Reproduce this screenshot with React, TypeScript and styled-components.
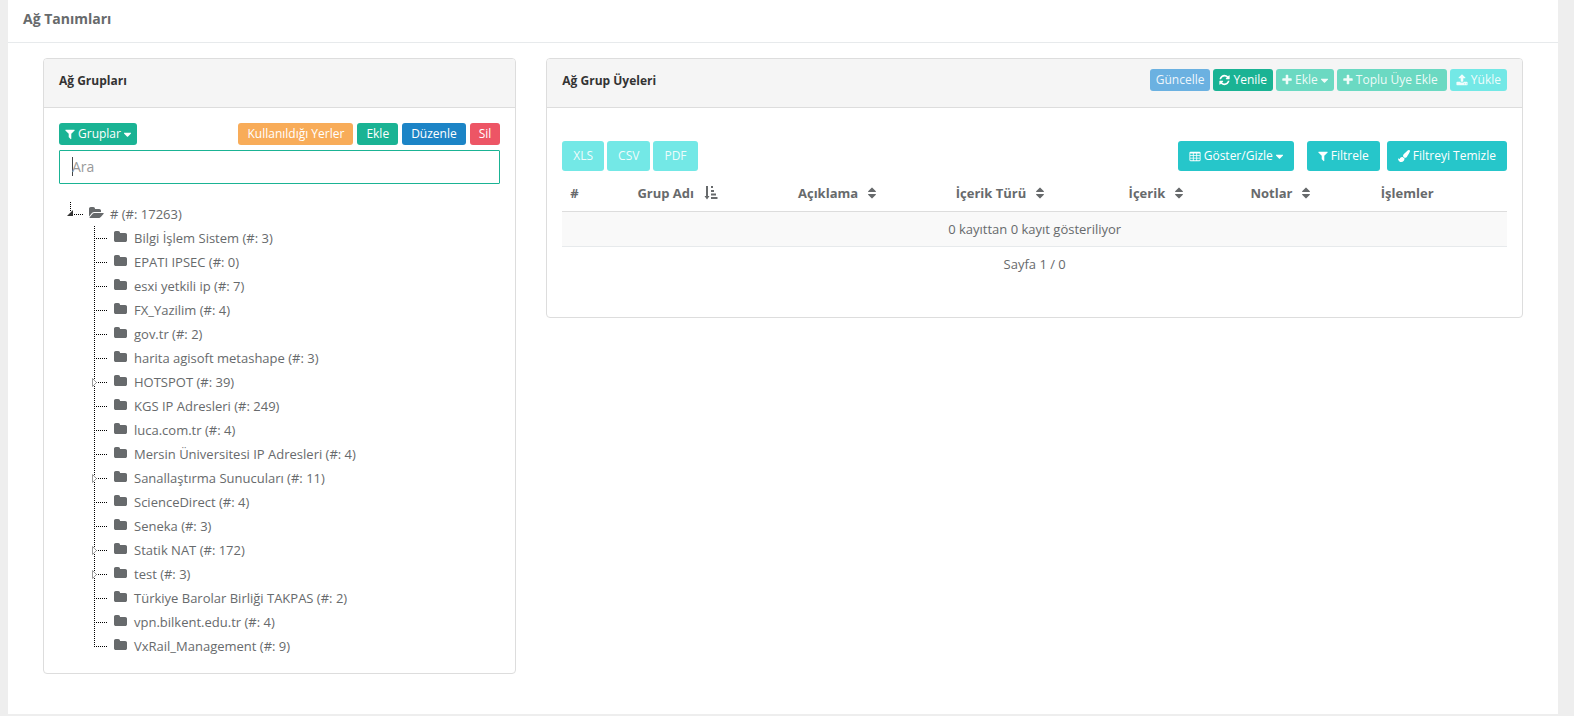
import React from "react";
import styled, { createGlobalStyle } from "styled-components";

const GlobalStyle = createGlobalStyle`
  *, *::before, *::after { box-sizing: border-box; }
  body {
    margin: 0;
    background: #eeeeee;
    color: #676a6c;
    font-family: "Open Sans", "Liberation Sans", sans-serif;
    font-size: 13px;
    line-height: 20px;
  }
  button, input { font-family: inherit; }
`;

const Page = styled.main`
  margin: 0 16px 0 8px;
  background: #ffffff;
  padding-bottom: 40px;
`;

const PageHeader = styled.header`
  padding: 9px 15px 13px;
  border-bottom: 1px solid #e7eaec;
`;

const PageTitle = styled.h1`
  margin: 0;
  font-size: 14px;
  line-height: 20px;
  font-weight: 700;
`;

const Columns = styled.div`
  display: grid;
  grid-template-columns: minmax(0, 1fr) minmax(0, 2fr);
  align-items: start;
  padding: 15px 20px 0;
`;

const Column = styled.div`
  padding: 0 15px;
`;

const Panel = styled.section`
  border: 1px solid #dddddd;
  border-radius: 4px;
  background: #ffffff;
  overflow: hidden;
`;

const PanelHeader = styled.header`
  display: flex;
  justify-content: space-between;
  align-items: flex-start;
  height: 49px;
  padding: 10px 15px;
  background: #f5f5f5;
  border-bottom: 1px solid #dddddd;
`;

const PanelTitle = styled.h2`
  margin: 0;
  color: #333333;
  font-size: 12px;
  line-height: 24px;
  font-weight: 700;
`;

const PanelBody = styled.div<{ $top?: number; $bottom?: number }>`
  padding: ${({ $top = 15 }) => $top}px 15px ${({ $bottom = 15 }) => $bottom}px;
`;

const Toolbar = styled.div`
  display: flex;
  justify-content: space-between;
`;

const ButtonGroup = styled.div<{ $gap?: number }>`
  display: flex;
  gap: ${({ $gap = 3 }) => $gap}px;
`;

const tones = {
  primary: { base: "#1ab394", muted: "#6bd9c2" },
  success: { base: "#1c84c6", muted: "#6bb1e1" },
  info: { base: "#26c6ca", muted: "#73e8e6" },
  warning: { base: "#f8ac59", muted: "#fbcd9b" },
  danger: { base: "#ed5565", muted: "#f499a3" },
};

const Button = styled.button<{
  $tone: keyof typeof tones;
  $size?: "small" | "medium";
  $wide?: boolean;
  $trailing?: boolean;
}>`
  display: inline-flex;
  align-items: center;
  gap: 3px;
  height: ${({ $size }) => ($size === "medium" ? 30 : 22)}px;
  padding: 0 ${({ $size, $wide }) => ($size === "medium" ? 11 : $wide ? 9 : 6)}px;
  ${({ $trailing }) => $trailing && "padding-right: 9px;"}
  border: 0;
  border-radius: 3px;
  background: ${({ $tone }) => tones[$tone].base};
  color: #ffffff;
  font-size: 12px;
  line-height: 18px;
  white-space: nowrap;
  cursor: pointer;

  &:disabled {
    background: ${({ $tone }) => tones[$tone].muted};
    color: rgba(255, 255, 255, 0.9);
    cursor: not-allowed;
  }
`;

const SearchInput = styled.input`
  display: block;
  width: 100%;
  height: 34px;
  margin-top: 5px;
  padding: 6px 12px 8px;
  border: 1px solid #1ab394;
  border-radius: 1px;
  background: #ffffff;
  color: #676a6c;
  font-size: 14px;
  outline: none;

  &::placeholder { color: #999999; opacity: 1; }

  /* steady caret while the field is empty */
  &:placeholder-shown {
    caret-color: transparent;
    background: #ffffff linear-gradient(#444648, #444648) 12px 6px / 1px 19px no-repeat;
  }
`;

const Tree = styled.ul`
  list-style: none;
  margin: 0;
  padding: 0;
`;

const RootTree = styled(Tree)`
  margin-top: 18px;
`;

const Branch = styled(Tree)`
  padding-left: 24px;
`;

const NodeRow = styled.div`
  display: flex;
  align-items: center;
  height: 24px;
`;

const Joint = styled.svg`
  flex: none;
  width: 24px;
  height: 24px;
`;

const NodeLink = styled.a`
  display: flex;
  align-items: center;
  gap: 3px;
  color: inherit;
  text-decoration: none;
  white-space: nowrap;
`;

const NodeIcon = styled.span`
  display: flex;
  justify-content: center;
  width: 24px;
  padding: 0 0 2px 2px;
`;

const Table = styled.table`
  width: 100%;
  margin-top: 5px;
  border-collapse: collapse;
  table-layout: fixed;
`;

const HeadCell = styled.th<{ $width: string }>`
  width: ${({ $width }) => $width};
  height: 35px;
  padding: 0 8px 1px;
  border-bottom: 1px solid #dddddd;
  text-align: left;
  font-weight: 700;
`;

const HeadLabel = styled.span`
  display: flex;
  align-items: center;
  gap: 10px;
  white-space: nowrap;
`;

const Cell = styled.td<{ $striped?: boolean }>`
  height: 35px;
  padding: 0 8px;
  border-bottom: 1px solid ${({ $striped }) => ($striped ? "#e7eaec" : "transparent")};
  background: ${({ $striped }) => ($striped ? "#f9f9f9" : "transparent")};
  text-align: center;
`;

const Glyph = styled.svg`
  flex: none;
  display: block;
  fill: currentColor;
`;

const shapes = {
  folder:
    "M1728 608v704q0 92-66 158t-158 66h-1216q-92 0-158-66t-66-158v-960q0-92 66-158t158-66h320q92 0 158 66t66 158v32h672q92 0 158 66t66 158z",
  folderOpen:
    "M1879 952q0 31-31 66l-336 396q-43 51-120.5 86.5t-143.5 35.5h-1088q-34 0-60.5-13t-26.5-43q0-31 31-66l336-396q43-51 120.5-86.5t143.5-35.5h1088q34 0 60.5 13t26.5 43zm-343-344v160h-832q-94 0-197 47.5t-164 119.5l-337 396-5 6q0-4-.5-12.5t-.5-12.5v-960q0-92 66-158t158-66h320q92 0 158 66t66 158v32h544q92 0 158 66t66 158z",
  filter:
    "M1595 295q17 41-14 70l-493 493v742q0 42-39 59-13 5-25 5-27 0-45-19l-256-256q-19-19-19-45v-486l-493-493q-31-29-14-70 17-39 59-39h1280q42 0 59 39z",
  plus: "M1600 736v192q0 40-28 68t-68 28h-416v416q0 40-28 68t-68 28h-192q-40 0-68-28t-28-68v-416h-416q-40 0-68-28t-28-68v-192q0-40 28-68t68-28h416v-416q0-40 28-68t68-28h192q40 0 68 28t28 68v416h416q40 0 68 28t28 68z",
  refresh:
    "M1639 1056q0 5-1 7-64 268-268 434.5t-478 166.5q-146 0-282.5-55t-243.5-157l-129 129q-19 19-45 19t-45-19-19-45v-448q0-26 19-45t45-19h448q26 0 45 19t19 45-19 45l-137 137q71 66 161 102t187 36q134 0 250-65t186-179q11-17 53-117 8-23 30-23h192q13 0 22.5 9.5t9.5 22.5zm25-800v448q0 26-19 45t-45 19h-448q-26 0-45-19t-19-45 19-45l138-138q-148-137-349-137-134 0-250 65t-186 179q-11 17-53 117-8 23-30 23h-199q-13 0-22.5-9.5t-9.5-22.5v-7q65-268 270-434.5t480-166.5q146 0 284 55.5t245 156.5l130-129q19-19 45-19t45 19 19 45z",
  upload:
    "M1344 1472q0-26-19-45t-45-19-45 19-19 45 19 45 45 19 45-19 19-45zm256 0q0-26-19-45t-45-19-45 19-19 45 19 45 45 19 45-19 19-45zm128-224v320q0 40-28 68t-68 28h-1472q-40 0-68-28t-28-68v-320q0-40 28-68t68-28h427q21 56 70.5 92t110.5 36h256q61 0 110.5-36t70.5-92h427q40 0 68 28t28 68zm-325-648q-17 40-59 40h-256v448q0 26-19 45t-45 19h-256q-26 0-45-19t-19-45v-448h-256q-42 0-59-40-17-39 14-69l448-448q18-19 45-19t45 19l448 448q31 30 14 69z",
  caret:
    "M1408 704q0 26-19 45l-448 448q-19 19-45 19t-45-19l-448-448q-19-19-19-45t19-45 45-19h896q26 0 45 19t19 45z",
  brush:
    "M1615 0q70 0 122.5 46.5t52.5 116.5q0 63-45 151-332 629-465 752-97 91-218 91-126 0-216.5-92.5t-90.5-219.5q0-128 92-212l638-579q59-54 130-54zm-909 1034q39 76 106.5 130t150.5 76l1 71q4 213-129.5 347t-348.5 134q-123 0-218-46.5t-152.5-127.5-86.5-183-29-220q7 5 41 30t62 44.5 59 36.5 46 17q41 0 55-37 25-66 57.5-112.5t69.5-76 88-47.5 103-25.5 125-10.5z",
  table:
    "M224 256h1344q160 0 160 160v1088q0 160-160 160h-1344q-160 0-160-160v-1088q0-160 160-160zM192 512h384v256h-384zM704 512h384v256h-384zM1216 512h384v256h-384zM192 896h384v256h-384zM704 896h384v256h-384zM1216 896h384v256h-384zM192 1280h384v256h-384zM704 1280h384v256h-384zM1216 1280h384v256h-384z",
  sort: "M1408 1088q0 26-19 45l-448 448q-19 19-45 19t-45-19l-448-448q-19-19-19-45t19-45 45-19h896q26 0 45 19t19 45zM1408 704q0 26-19 45t-45 19h-896q-26 0-45-19t-19-45 19-45l448-448q19-19 45-19t45 19l448 448q19 19 19 45z",
};

/* view boxes trim each 1792-unit drawing to its advance width */
const boxes: Record<keyof typeof shapes, [number, number]> = {
  folder: [64, 1664],
  folderOpen: [0, 1920],
  filter: [192, 1408],
  plus: [192, 1408],
  refresh: [128, 1536],
  upload: [64, 1664],
  caret: [416, 960],
  brush: [0, 1792],
  table: [64, 1664],
  sort: [384, 1024],
};

function Icon({ name, size = 12 }: { name: keyof typeof shapes; size?: number }) {
  const [x, width] = boxes[name];
  return (
    <Glyph
      aria-hidden="true"
      width={Math.ceil((width / 1792) * size)}
      height={size}
      viewBox={`${x} 0 ${width} 1792`}
    >
      <path fillRule="evenodd" d={shapes[name]} />
    </Glyph>
  );
}

function SortedIcon() {
  return (
    <Glyph aria-hidden="true" width="14" height="14" viewBox="0 0 14 14">
      <path d="M2 0h2v10h1.500l-2.500 3.500l-2.500-3.500h1.500zM7 0h2v2h-2zM7 4h3v2h-3zM7 7.500h5v2h-5zM7 11h6.500v2h-6.500z" />
    </Glyph>
  );
}

type JointKind = "leaf" | "last" | "closed" | "open";

function TreeJoint({ kind }: { kind: JointKind }) {
  const bottom = kind === "last" ? 13 : kind === "open" ? 9 : 24;
  return (
    <Joint aria-hidden="true" viewBox="0 0 24 24">
      <path d={`M11.500 0V${bottom}`} stroke="#000000" strokeDasharray="1 1" fill="none" />
      <path d="M13 12.500H24" stroke="#000000" strokeDasharray="1 1" fill="none" />
      {kind === "closed" && <path d="M9.500 8.500v8l4-4z" fill="#ffffff" stroke="#999999" />}
      {kind === "open" && <path d="M14 8v6h-6z" fill="#333333" />}
    </Joint>
  );
}

const groups: { label: string; closed?: boolean }[] = [
  { label: "Bilgi İşlem Sistem (#: 3)" },
  { label: "EPATI IPSEC (#: 0)" },
  { label: "esxi yetkili ip (#: 7)" },
  { label: "FX_Yazilim (#: 4)" },
  { label: "gov.tr (#: 2)" },
  { label: "harita agisoft metashape (#: 3)" },
  { label: "HOTSPOT (#: 39)", closed: true },
  { label: "KGS IP Adresleri (#: 249)" },
  { label: "luca.com.tr (#: 4)" },
  { label: "Mersin Üniversitesi IP Adresleri (#: 4)" },
  { label: "Sanallaştırma Sunucuları (#: 11)", closed: true },
  { label: "ScienceDirect (#: 4)" },
  { label: "Seneka (#: 3)" },
  { label: "Statik NAT (#: 172)", closed: true },
  { label: "test (#: 3)", closed: true },
  { label: "Türkiye Barolar Birliği TAKPAS (#: 2)" },
  { label: "vpn.bilkent.edu.tr (#: 4)" },
  { label: "VxRail_Management (#: 9)" },
];

const headings: { label: string; width: string; sort?: "both" | "sorted" }[] = [
  { label: "#", width: "7.1%" },
  { label: "Grup Adı", width: "17%", sort: "sorted" },
  { label: "Açıklama", width: "16.7%", sort: "both" },
  { label: "İçerik Türü", width: "18.3%", sort: "both" },
  { label: "İçerik", width: "12.9%", sort: "both" },
  { label: "Notlar", width: "13.8%", sort: "both" },
  { label: "İşlemler", width: "14.2%" },
];

function GroupTree() {
  return (
    <RootTree>
      <li>
        <NodeRow>
          <TreeJoint kind="open" />
          <NodeLink href="#root">
            <NodeIcon>
              <Icon name="folderOpen" size={14} />
            </NodeIcon>
            # (#: 17263)
          </NodeLink>
        </NodeRow>
        <Branch>
          {groups.map(({ label, closed }, index) => (
            <li key={label}>
              <NodeRow>
                <TreeJoint kind={closed ? "closed" : index === groups.length - 1 ? "last" : "leaf"} />
                <NodeLink href={`#group-${index + 1}`}>
                  <NodeIcon>
                    <Icon name="folder" size={14} />
                  </NodeIcon>
                  {label}
                </NodeLink>
              </NodeRow>
            </li>
          ))}
        </Branch>
      </li>
    </RootTree>
  );
}

export default function App() {
  return (
    <>
      <GlobalStyle />
      <Page>
        <PageHeader>
          <PageTitle>Ağ Tanımları</PageTitle>
        </PageHeader>
        <Columns>
          <Column>
            <Panel>
              <PanelHeader>
                <PanelTitle>Ağ Grupları</PanelTitle>
              </PanelHeader>
              <PanelBody>
                <Toolbar>
                  <Button $tone="primary">
                    <Icon name="filter" />
                    Gruplar
                    <Icon name="caret" size={13} />
                  </Button>
                  <ButtonGroup $gap={4}>
                    <Button $tone="warning" $wide>Kullanıldığı Yerler</Button>
                    <Button $tone="primary" $wide>Ekle</Button>
                    <Button $tone="success" $wide>Düzenle</Button>
                    <Button $tone="danger" $wide>Sil</Button>
                  </ButtonGroup>
                </Toolbar>
                <SearchInput type="text" placeholder="Ara" aria-label="Ara" autoFocus />
                <GroupTree />
              </PanelBody>
            </Panel>
          </Column>
          <Column>
            <Panel>
              <PanelHeader>
                <PanelTitle>Ağ Grup Üyeleri</PanelTitle>
                <ButtonGroup>
                  <Button $tone="success" disabled>Güncelle</Button>
                  <Button $tone="primary">
                    <Icon name="refresh" />
                    Yenile
                  </Button>
                  <Button $tone="primary" disabled>
                    <Icon name="plus" />
                    Ekle
                    <Icon name="caret" size={13} />
                  </Button>
                  <Button $tone="primary" $trailing disabled>
                    <Icon name="plus" />
                    Toplu Üye Ekle
                  </Button>
                  <Button $tone="info" disabled>
                    <Icon name="upload" />
                    Yükle
                  </Button>
                </ButtonGroup>
              </PanelHeader>
              <PanelBody $top={33} $bottom={35}>
                <Toolbar>
                  <ButtonGroup>
                    <Button $tone="info" $size="medium" disabled>XLS</Button>
                    <Button $tone="info" $size="medium" disabled>CSV</Button>
                    <Button $tone="info" $size="medium" disabled>PDF</Button>
                  </ButtonGroup>
                  <ButtonGroup $gap={13}>
                    <Button $tone="info" $size="medium">
                      <Icon name="table" />
                      Göster/Gizle
                      <Icon name="caret" size={13} />
                    </Button>
                    <ButtonGroup $gap={7}>
                      <Button $tone="info" $size="medium">
                        <Icon name="filter" />
                        Filtrele
                      </Button>
                      <Button $tone="info" $size="medium">
                        <Icon name="brush" />
                        Filtreyi Temizle
                      </Button>
                    </ButtonGroup>
                  </ButtonGroup>
                </Toolbar>
                <Table>
                  <thead>
                    <tr>
                      {headings.map(({ label, width, sort }) => (
                        <HeadCell key={label} $width={width} scope="col">
                          <HeadLabel>
                            {label}
                            {sort === "sorted" && <SortedIcon />}
                            {sort === "both" && <Icon name="sort" size={14} />}
                          </HeadLabel>
                        </HeadCell>
                      ))}
                    </tr>
                  </thead>
                  <tbody>
                    <tr>
                      <Cell colSpan={7} $striped>0 kayıttan 0 kayıt gösteriliyor</Cell>
                    </tr>
                    <tr>
                      <Cell colSpan={7}>Sayfa 1 / 0</Cell>
                    </tr>
                  </tbody>
                </Table>
              </PanelBody>
            </Panel>
          </Column>
        </Columns>
      </Page>
    </>
  );
}
